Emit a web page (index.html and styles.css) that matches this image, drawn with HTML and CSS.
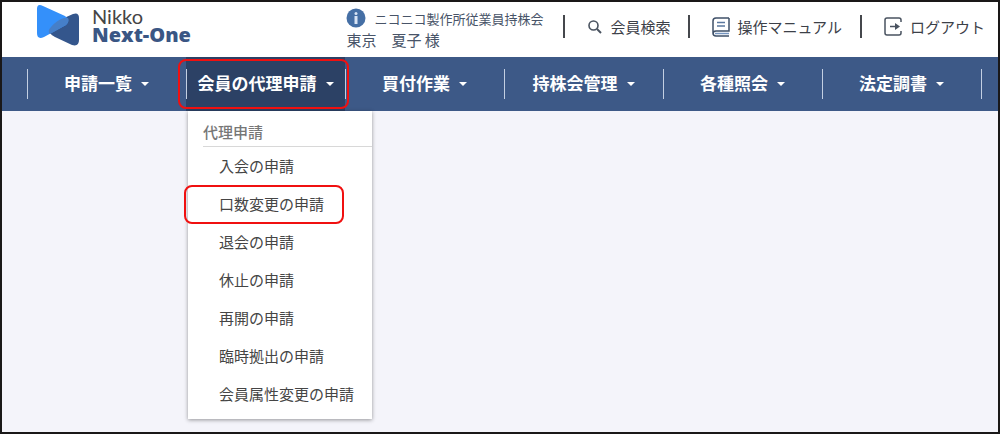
FILE: index.html
```html
<!DOCTYPE html>
<html lang="ja">
<head>
    <meta charset="UTF-8">
    <meta name="viewport" content="width=device-width, initial-scale=1.0">
    <title>Nikko Next-One</title>
    <link rel="stylesheet" href="styles.css">
</head>
<body>
    <!-- Header -->
    <header class="site-header">
        <a class="logo" href="#">
            <svg class="logo-mark" width="44" height="44" viewBox="0 0 44 44" aria-hidden="true">
                <path d="M37 10Q43 8 43 14V36Q43 43 36 41L19 33Q10 28 15 23Q22 16 28 14Z" fill="#34568c"/>
                <path d="M1 5Q1-1 7 2L29 12Q35 16 30 21L8 33Q1 36 1 29Z" fill="#3490fa"/>
                <path d="M32 14Q34 17 30 21L14 30Q11 27 15 23Q21 16 28 14Z" fill="#467fc8"/>
            </svg>
            <span class="logo-text">
                <span class="logo-top">Nikko</span>
                <span class="logo-bottom">Next-One</span>
            </span>
        </a>
        <div class="user-info">
            <div class="company">
                <svg width="20" height="20" viewBox="0 0 20 20" aria-hidden="true">
                    <circle cx="10" cy="10" r="9.5" fill="#456fa5"/>
                    <circle cx="10" cy="5.5" r="1.5" fill="#d8e4f5"/>
                    <rect x="8.5" y="8" width="3" height="8" fill="#d8e4f5"/>
                </svg>
                <span>ニコニコ製作所従業員持株会</span>
            </div>
            <div class="user-name">東京　夏子 様</div>
        </div>
        <nav class="tools">
            <a class="tool" href="#">
                <svg width="16" height="16" viewBox="0 0 16 16" fill="none" stroke="#4a5360" aria-hidden="true">
                    <circle cx="6.5" cy="6.5" r="4.5" stroke-width="1.6"/>
                    <path d="M10 10L14 14" stroke-width="2"/>
                </svg>
                会員検索
            </a>
            <a class="tool" href="#">
                <svg width="18" height="20" viewBox="0 0 18 20" fill="none" stroke="#3f5068" stroke-width="1.5" aria-hidden="true">
                    <path d="M17 1H4Q1 1 1 4V16Q1 19 4 19H17M17 1V14H4Q1 14 1 17"/>
                    <path d="M5 5.5H13M5 9H13" stroke="#5b789f"/>
                    <path d="M3 16.5H17" stroke="#7595c0"/>
                </svg>
                操作マニュアル
            </a>
            <a class="tool" href="#">
                <svg width="19" height="19" viewBox="0 0 19 19" fill="none" stroke="#4a5360" stroke-width="1.5" aria-hidden="true">
                    <path d="M17 5V3Q17 1 15 1H3Q1 1 1 3V16Q1 18 3 18H15Q17 18 17 16V14"/>
                    <path d="M6 9.5H14"/>
                    <path d="M11 6L16 9.5L11 13Z" fill="#4a5360" stroke="none"/>
                </svg>
                ログアウト
            </a>
        </nav>
    </header>

    <!-- Main menu -->
    <nav class="main-nav">
        <div class="nav-item"><button class="nav-button">申請一覧</button></div>
        <div class="nav-item active">
            <button class="nav-button" aria-expanded="true">会員の代理申請</button>
            <div class="dropdown">
                <div class="dropdown-title">代理申請</div>
                <ul class="dropdown-list">
                    <li><a href="#">入会の申請</a></li>
                    <li class="marked"><a href="#">口数変更の申請</a></li>
                    <li><a href="#">退会の申請</a></li>
                    <li><a href="#">休止の申請</a></li>
                    <li><a href="#">再開の申請</a></li>
                    <li><a href="#">臨時拠出の申請</a></li>
                    <li><a href="#">会員属性変更の申請</a></li>
                </ul>
            </div>
        </div>
        <div class="nav-item"><button class="nav-button">買付作業</button></div>
        <div class="nav-item"><button class="nav-button">持株会管理</button></div>
        <div class="nav-item"><button class="nav-button">各種照会</button></div>
        <div class="nav-item"><button class="nav-button">法定調書</button></div>
    </nav>
</body>
</html>
```
FILE: styles.css
```css
* {
    box-sizing: border-box;
}

body {
    margin: 0;
    min-height: 100vh;
    border: 2px solid #1a1818;
    background-color: #f4f4fa;
    font-family: "Noto Sans CJK JP", sans-serif;
    font-size: 15px;
    color: #3c4048;
}

a {
    color: inherit;
    text-decoration: none;
}

/* Header */
.site-header {
    display: flex;
    height: 55px;
    padding: 0 13px 0 34px;
    background-color: #ffffff;
}

.logo {
    display: flex;
    gap: 12px;
    padding-top: 2px;
}

.logo-text {
    display: flex;
    flex-direction: column;
    gap: 3px;
    line-height: 16px;
    padding-top: 4px;
}

.logo-top {
    font-family: Lato, sans-serif;
    font-size: 20px;
    color: #454545;
}

.logo-bottom {
    font-family: "Open Sans", sans-serif;
    font-size: 20px;
    font-weight: 800;
    color: #3a5684;
}

.user-info {
    margin-left: auto;
    padding-top: 4px;
    color: #485468;
}

.company {
    display: flex;
    align-items: center;
    gap: 8px;
    height: 24px;
    font-size: 13px;
}

.user-name {
    line-height: 20px;
}

/* Header links */
.tools {
    display: flex;
    align-items: flex-start;
    padding-top: 13px;
    margin-left: 20px;
}

.tool {
    display: flex;
    align-items: center;
    gap: 7px;
    height: 23px;
    padding: 0 18px 0 22px;
    border-left: 2px solid #45474c;
    white-space: nowrap;
}

.tool:last-child {
    padding-right: 0;
}

/* Main menu */
.main-nav {
    display: grid;
    grid-template-columns: repeat(6, 1fr);
    height: 54px;
    padding: 0 17px 0 25px;
    background-color: #3d5987;
}

.nav-item {
    position: relative;
    display: flex;
}

.nav-item::before,
.nav-item:last-child::after {
    content: "";
    position: absolute;
    top: 12px;
    left: 0;
    width: 1px;
    height: 30px;
    background-color: #c3cfe2;
}

.nav-item:last-child::after {
    left: 100%;
}

.nav-button {
    display: flex;
    flex: 1;
    align-items: center;
    justify-content: center;
    gap: 9px;
    padding: 0 0 4px;
    border: none;
    background: none;
    font-family: inherit;
    font-size: 17px;
    font-weight: 700;
    color: #ffffff;
    white-space: nowrap;
    cursor: pointer;
}

/* Small triangle beside the label */
.nav-button::after {
    content: "";
    margin-top: 4px;
    border: 4px solid transparent;
    border-top-color: #ffffff;
    border-bottom: none;
}

.active {
    background-color: #2c4165;
}

/* Red frames */
.active::after,
.marked::after {
    content: "";
    position: absolute;
    border: 2px solid #f01010;
    border-radius: 8px;
    pointer-events: none;
}

.active::after {
    top: 2px;
    bottom: 2px;
    left: -8px;
    right: -4px;
}

.marked::after {
    top: 0;
    bottom: -1px;
    left: -4px;
    right: 28px;
}

/* Dropdown */
.dropdown {
    position: absolute;
    top: 100%;
    left: 2px;
    width: 184px;
    padding: 9px 0 6px;
    background-color: #ffffff;
    box-shadow: 0 1px 4px rgba(0, 0, 0, 0.4);
}

.dropdown-title {
    margin-left: 15px;
    padding-bottom: 2px;
    border-bottom: 1px solid #d8d8d8;
    font-weight: 500;
    line-height: 24px;
    color: #777777;
}

.dropdown-list {
    margin: 0;
    padding: 0;
    list-style: none;
}

.dropdown-list li {
    position: relative;
}

.dropdown-list a {
    display: block;
    padding-left: 31px;
    line-height: 38px;
    color: #454545;
    white-space: nowrap;
}
```
